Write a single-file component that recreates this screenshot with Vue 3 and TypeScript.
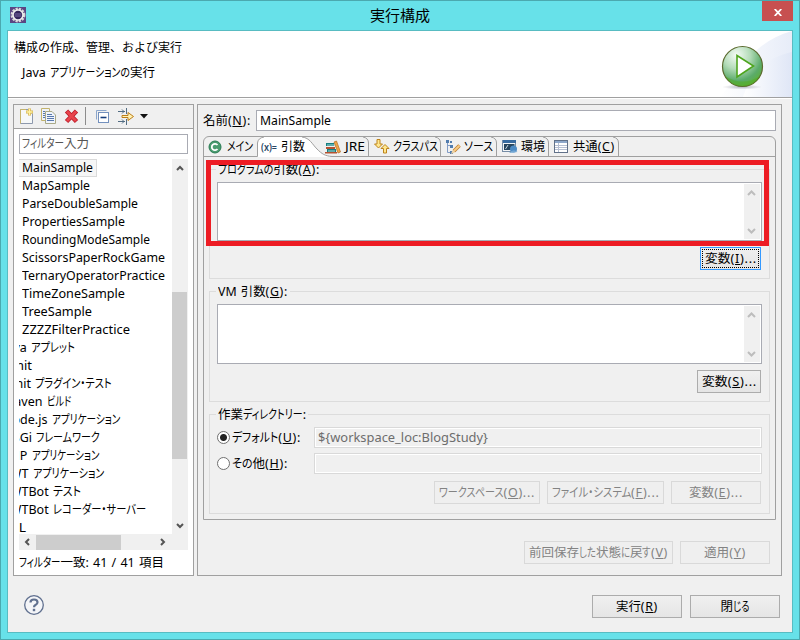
<script setup lang="ts">
import { defineComponent, h, onMounted, ref } from 'vue'

// Label fitted to a given width; "_X" marks an underlined mnemonic letter.
// Kana runs absorb the difference; labels without kana are scaled as a whole.
const Txt = defineComponent({
  props: {
    t: { type: String, required: true },
    w: { type: Number, required: true },
    full: { type: Boolean, default: false },
  },
  setup(props) {
    const root = ref<HTMLElement | null>(null)
    onMounted(() => {
      const inner = root.value?.firstElementChild as HTMLElement | null
      if (!inner) return
      const total = inner.getBoundingClientRect().width
      const kana = Array.from(inner.querySelectorAll<HTMLElement>('.kana'))
      const widths = kana.map((k) => k.getBoundingClientRect().width)
      const kanaTotal = widths.reduce((a, b) => a + b, 0)
      if (kanaTotal > 0) {
        const s = (props.w - (total - kanaTotal)) / kanaTotal
        kana.forEach((k, i) => {
          k.style.transform = `scaleX(${s})`
          k.style.marginRight = `${widths[i] * (s - 1)}px`
        })
      } else if (total > 0) {
        inner.style.transform = `scaleX(${props.w / total})`
      }
    })
    return () => {
      const parts = props.t.split(/([ぁ-んァ-ヶー・、]+|\(_[A-Z]\)[:.]*)/).filter(Boolean)
      return h('span', { class: ['txt', { full: props.full }], style: { width: props.w + 'px' }, ref: root }, [
        h(
          'span',
          { class: 'txt-in' },
          parts.map((p) => {
            if (/^\(_/.test(p)) return h('span', { class: 'key' }, ['(', h('u', p[2]), p.slice(3)])
            return /^[ぁ-んァ-ヶー・、]/.test(p) ? h('span', { class: 'kana' }, p) : p
          }),
        ),
      ])
    }
  },
})

interface Row { t: string; w: number; cat?: boolean; sel?: boolean }
const rows: Row[] = [
  { t: 'MainSample', w: 71, sel: true },
  { t: 'MapSample', w: 68 },
  { t: 'ParseDoubleSample', w: 116 },
  { t: 'PropertiesSample', w: 103 },
  { t: 'RoundingModeSample', w: 128 },
  { t: 'ScissorsPaperRockGame', w: 143 },
  { t: 'TernaryOperatorPractice', w: 143 },
  { t: 'TimeZoneSample', w: 103 },
  { t: 'TreeSample', w: 70 },
  { t: 'ZZZZFilterPractice', w: 108 },
  { t: 'Java アプレット', w: 72, cat: true },
  { t: 'JUnit', w: 29, cat: true },
  { t: 'JUnit プラグイン・テスト', w: 109, cat: true },
  { t: 'Maven ビルド', w: 68, cat: true },
  { t: 'Node.js アプリケーション', w: 117, cat: true },
  { t: 'OSGi フレームワーク', w: 97, cat: true },
  { t: 'PHP アプリケーション', w: 96, cat: true },
  { t: 'SWT アプリケーション', w: 101, cat: true },
  { t: 'SWTBot テスト', w: 78, cat: true },
  { t: 'SWTBot レコーダー・サーバー', w: 143, cat: true },
  { t: 'XSL', w: 23, cat: true },
]
</script>

<template>
  <div class="window">
    <header class="titlebar">
      <svg class="app-icon" width="16" height="16" viewBox="0 0 16 16">
        <rect width="16" height="16" fill="#5a4683" />
        <circle cx="8" cy="8" r="6.1" fill="none" stroke="#d8d8d8" stroke-width="2.6" stroke-dasharray="2.2 1" />
        <circle cx="8" cy="8" r="5" fill="#33265a" stroke="#eee" stroke-width="1.6" />
        <path d="M4.5 7h7M4.5 9h7" stroke="#7b6aa4" stroke-width="1" />
      </svg>
      <h1><Txt t="実行構成" :w="60" /></h1>
      <button class="close">
        <svg width="8" height="7" viewBox="0 0 8 7"><path d="M.7 0L7.3 7M7.3 0L.7 7" stroke="#fff" stroke-width="1.8" /></svg>
      </button>
    </header>

    <main class="client">
      <section class="banner">
        <div class="banner-text">
          <Txt t="構成の作成、管理、および実行" :w="168" full />
          <Txt class="sub" t="Java アプリケーションの実行" :w="133" />
        </div>
        <svg class="art" width="92" height="66" viewBox="0 0 92 66">
          <defs>
            <linearGradient id="sweep" x1="0" x2="1"><stop offset="0" stop-color="#fff" /><stop offset="1" stop-color="#dfe6f6" /></linearGradient>
            <radialGradient id="ball" cx=".35" cy=".22" r=".85">
              <stop offset="0" stop-color="#f5fbf5" /><stop offset=".4" stop-color="#b4dcb9" /><stop offset=".75" stop-color="#5bab6a" /><stop offset="1" stop-color="#5cb035" />
            </radialGradient>
            <radialGradient id="shade"><stop offset="0" stop-color="#778" stop-opacity=".5" /><stop offset="1" stop-color="#778" stop-opacity="0" /></radialGradient>
          </defs>
          <path d="M92 0C68 7 52 20 42 38L20 66H92Z" fill="url(#sweep)" opacity=".75" />
          <path d="M92 21C70 26 52 38 43 66H92Z" fill="url(#sweep)" />
          <ellipse cx="42" cy="56" rx="20" ry="2.5" fill="url(#shade)" />
          <circle cx="42.5" cy="35.5" r="20" fill="url(#ball)" stroke="#5c6b30" stroke-width="1.2" />
          <path d="M25 45A20 20 0 0 0 60 45Q43 56 25 45" fill="#4fad12" opacity=".4" />
          <path d="M37 24.500V46L53.500 35Z" fill="#fff" stroke="#4ea51d" stroke-width="1.600" />
        </svg>
      </section>

      <section class="work">
        <aside class="side">
          <div class="toolbar">
            <svg width="132" height="18" viewBox="0 0 132 18" fill="none">
              <path d="M1.500 2.500H9.500L13.500 7V16.500H1.500Z" fill="#f6f8f8" stroke="#8e99ad" />
              <path d="M1.500 16.500V2.500H7" stroke="#c6b46b" />
              <path d="M10.500 1.500V8.500M7 5H14" stroke="#d3b04e" stroke-width="3" />
              <path d="M10.500 2V8M7.500 5H13.500" stroke="#fff2a0" stroke-width="1.500" />
              <path d="M22.500 1.500H30.500V13.500H22.500Z" fill="#eff3f9" stroke="#c3b36d" />
              <path d="M26.500 4.500H33L36.500 8V16.500H26.500Z" fill="#eff4fc" stroke="#a9a987" />
              <path d="M24 4.500H26M24 6.500H26M24 8.500H26M24 10.500H26M28 7.500H33M28 9.500H35M28 11.500H35M28 13.500H35" stroke="#5878ad" />
              <path d="M47.500 4L57.500 14.500M57.500 4L47.500 14.500" stroke="#bd1e2c" stroke-width="4.600" />
              <path d="M48 4.500L57 14M57 4.500L48 14" stroke="#e8444c" stroke-width="2.800" />
              <path d="M66.500 0V18" stroke="#8c8c8c" />
              <path d="M77.500 12.500V3.500H87.500" stroke="#8ba6cc" /><rect x="79.500" y="5.500" width="10" height="10" fill="#fff" stroke="#7390bd" />
              <path d="M81.500 10.500H87.500" stroke="#153c7c" stroke-width="1.600" />
              <path d="M99 4.500H106M99 14.500H106M103 2.500L105 4.500L103 6.500M103 12.500L105 14.500L103 16.500M107.500 1V7M107.500 12V18" stroke="#536d83" />
              <path d="M103 8.500H109V5.500L114.500 9.500L109 13.500V10.500H103Z" fill="#fff3b4" stroke="#bd7e19" />
              <path d="M121 7H129L125 11.500Z" fill="#111" />
            </svg>
          </div>
          <div class="filter"><Txt t="フィルター入力" :w="67" /></div>
          <div class="tree">
            <ul class="rows">
              <li v-for="r in rows" :key="r.t" :class="{ cat: r.cat, sel: r.sel }"><Txt :t="r.t" :w="r.w" /></li>
            </ul>
            <div class="vbar">
              <svg width="8" height="6" viewBox="0 0 8 6"><path d="M1 5L4 2L7 5" fill="none" stroke="#555" stroke-width="2" /></svg>
              <i class="vthumb"></i>
              <svg width="8" height="6" viewBox="0 0 8 6"><path d="M1 1L4 4L7 1" fill="none" stroke="#555" stroke-width="2" /></svg>
            </div>
          </div>
          <div class="hbar">
            <svg width="6" height="8" viewBox="0 0 6 8"><path d="M5 1L2 4L5 7" fill="none" stroke="#555" stroke-width="2" /></svg>
            <i class="hthumb"></i>
            <svg width="6" height="8" viewBox="0 0 6 8"><path d="M1 1L4 4L1 7" fill="none" stroke="#555" stroke-width="2" /></svg>
          </div>
          <div class="status"><Txt t="フィルター一致: 41 / 41 項目" :w="145" /></div>
        </aside>

        <section class="panel">
          <div class="name-row">
            <Txt t="名前(_N):" :w="48" />
            <div class="input"><Txt t="MainSample" :w="71" /></div>
          </div>

          <div class="folder">
            <nav class="tabs">
              <svg class="tab-lines" width="571" height="20" viewBox="0 0 571 20" fill="none" stroke="#a0a0a0">
                <path d="M53.500 20V6Q54 1 60 0H98C106 1 108 7 113 12C118 17 121 19 128 20Z" fill="#fff" stroke="none" />
                <path d="M0 19.500H53.500V6Q54 1 60 0M98 0C106 1 108 7 113 12C118 17 121 19 128 19.500H571" />
                <path d="M159 0Q164.500 1 164.500 6V19M231 0Q236.500 1 236.500 6V19M287 0Q292.500 1 292.500 6V19M339 0Q344.500 1 344.500 6V19M409 0Q414.500 1 414.500 6V19" />
              </svg>
              <div class="tab t1">
                <svg width="14" height="14" viewBox="0 0 14 14"><circle cx="7" cy="7" r="6" fill="#4a9c70" stroke="#287b52" /><path d="M9.500 5A3.200 3.200 0 1 0 9.500 9" fill="none" stroke="#fff" stroke-width="1.800" /></svg>
                <Txt t="メイン" :w="26" />
              </div>
              <div class="tab t2">
                <span class="var"><Txt t="(x)=" :w="16" /></span>
                <Txt t="引数" :w="24" />
              </div>
              <div class="tab t3">
                <svg width="16" height="14" viewBox="0 0 16 14">
                  <path d="M1 3H9V6H1ZM2 9H11V12H2Z" fill="#167f81" /><path d="M2 5H10M3 11H10" stroke="#a8d8d3" />
                  <path d="M1 7H10V9H1ZM0 12H12V13.500H0Z" fill="#b65231" /><path d="M9 2L11.500 1L15.500 12L13 13Z" fill="#eda447" stroke="#b66b1f" stroke-width=".7" />
                </svg>
                <Txt t="JRE" :w="20" />
              </div>
              <div class="tab t4">
                <svg width="16" height="15" viewBox="0 0 16 15" fill="#ffe78e" stroke="#be841b">
                  <path d="M3 .5H6V5H8.500L4.500 9L.5 5H3Z" /><path d="M11 5.500L15 9.500H12.500V14H9.500V9.500H7Z" />
                </svg>
                <Txt t="クラスパス" :w="45" />
              </div>
              <div class="tab t5">
                <svg width="16" height="16" viewBox="0 0 16 16" fill="none">
                  <path d="M2.500 3V13.500H6M2.500 6.500H6" stroke="#819bc5" /><path d="M1 1H4V4H1ZM5 2H7V4H5ZM5 6H8V9H5ZM5 12H8V15H5Z" fill="#527cae" />
                  <path d="M14.500 6.500L9 12" stroke="#bf7a28" stroke-width="3.600" /><path d="M14.300 6.700L9 12" stroke="#f6cb86" stroke-width="2.100" /><path d="M6 15L7.500 11L10 13.500Z" fill="#ecd2a5" />
                </svg>
                <Txt t="ソース" :w="29" />
              </div>
              <div class="tab t6">
                <svg width="16" height="15" viewBox="0 0 16 15">
                  <rect x=".5" y="1.500" width="13" height="11" fill="#f2f4f5" stroke="#768ca5" /><rect x="1" y="1" width="13" height="3" fill="#376a9f" /><rect x="2" y="5" width="10.500" height="6" fill="#26445d" />
                  <path d="M3.500 10L6 6" stroke="#c7d5df" /><circle cx="11.500" cy="10" r="3.500" fill="#4b8ac4" /><path d="M7 14Q11.500 9 15.500 13Z" fill="#72a7d4" />
                </svg>
                <Txt t="環境" :w="24" />
              </div>
              <div class="tab t7">
                <svg width="14" height="13" viewBox="0 0 14 13">
                  <rect x=".5" y=".5" width="13" height="12" fill="#fff" stroke="#617189" /><path d="M1 1H13V3H1Z" fill="#8da7ca" />
                  <path d="M4.500 3V12M1 5.500H13M1 7.500H13M1 9.500H13" stroke="#b6bfd2" />
                </svg>
                <Txt t="共通(_C)" :w="42" />
              </div>
            </nav>

            <div class="group g1">
              <div class="legend"><Txt t="プログラムの引数(_A):" :w="102" /></div>
              <div class="area">
                <svg width="16" height="55" viewBox="0 0 16 55" fill="none" stroke="#bdbdbd" stroke-width="2"><path d="M4 11L7.500 7.500L11 11M4 45L7.500 48.500L11 45" /></svg>
              </div>
              <div class="actions"><button class="btn focus"><Txt t="変数(_I)..." :w="52" /></button></div>
            </div>

            <div class="group g2">
              <div class="legend"><Txt t="VM 引数(_G):" :w="70" /></div>
              <div class="area">
                <svg width="16" height="56" viewBox="0 0 16 56" fill="none" stroke="#bdbdbd" stroke-width="2"><path d="M4 11L7.500 7.500L11 11M4 46L7.500 49.500L11 46" /></svg>
              </div>
              <div class="actions"><button class="btn w64"><Txt t="変数(_S)..." :w="55" /></button></div>
            </div>

            <div class="group g3">
              <div class="legend"><Txt t="作業ディレクトリー:" :w="88" /></div>
              <div class="radio-row">
                <i class="radio on"></i><span class="radio-label"><Txt t="デフォルト(_U):" :w="69" /></span>
                <div class="field"><Txt t="${workspace_loc:BlogStudy}" :w="170" /></div>
              </div>
              <div class="radio-row second">
                <i class="radio"></i><span class="radio-label"><Txt t="その他(_H):" :w="56" /></span>
                <div class="field"></div>
              </div>
              <div class="actions">
                <button class="btn off w106"><Txt t="ワークスペース(_O)..." :w="96" /></button>
                <button class="btn off w117"><Txt t="ファイル・システム(_F)..." :w="108" /></button>
                <button class="btn off w90"><Txt t="変数(_E)..." :w="54" /></button>
              </div>
            </div>
          </div>

          <div class="panel-actions">
            <button class="btn off w149"><Txt t="前回保存した状態に戻す(_V)" :w="139" /></button>
            <button class="btn off w90"><Txt t="適用(_Y)" :w="42" /></button>
          </div>
        </section>
      </section>

      <footer class="footer">
        <svg width="22" height="22" viewBox="0 0 22 22" fill="none">
          <circle cx="11" cy="11" r="9.300" fill="#f4f5f8" stroke="#60708f" stroke-width="1.300" />
          <path d="M7.500 8.500Q7.500 5.500 11 5.500T14.500 8.300Q14.500 10 12.500 11Q11 11.800 11 13.300" stroke="#60708f" stroke-width="2.200" />
          <rect x="9.800" y="14.800" width="2.400" height="2.400" fill="#60708f" />
        </svg>
        <div class="footer-buttons">
          <button class="btn w90"><Txt t="実行(_R)" :w="42" /></button>
          <button class="btn w90"><Txt t="閉じる" :w="29" /></button>
        </div>
      </footer>
      <div class="highlight"></div>
    </main>
  </div>
</template>

<style>
body { margin: 0; overflow: hidden; }
.txt { display: inline-block; flex: none; white-space: pre; text-align: left; word-spacing: 1px; }
.txt-in { display: inline-block; transform-origin: 0 50%; font-feature-settings: "palt"; }
.txt.full .txt-in { font-feature-settings: normal; font-size: 12px; }
.txt .kana { display: inline-block; transform-origin: 0 50%; }
.txt .key { letter-spacing: 0.7px; }
.txt u { text-decoration-thickness: 1px; text-underline-offset: 1px; }
</style>

<style scoped>
* { box-sizing: border-box; }
.window { width: 800px; height: 640px; padding: 0 6px 6px; background: #67e1e9; border: 1px solid #4ba9af; font: 12.500px/18px "Noto Sans", "Noto Sans CJK JP", sans-serif; color: #000; position: relative; }
svg { display: block; flex: none; }
button { font: inherit; color: inherit; padding: 0; margin: 0; }
.titlebar { height: 29px; display: flex; align-items: flex-start; justify-content: space-between; }
.app-icon { margin: 6px 0 0 3px; }
.titlebar h1 { margin: 4px 0 0 12px; font-size: 15px; line-height: 20px; font-weight: 400; }
.close { width: 31px; height: 20px; border: 0; background: #c75050; display: flex; align-items: center; justify-content: center; padding-top: 2px; }
.client { height: 603px; background: #f0f0f0; border: 1px solid #58bcc2; }
.banner { height: 67px; background: #fff; border-bottom: 1px solid #a0a0a0; display: flex; justify-content: space-between; }
.banner-text { display: flex; flex-direction: column; align-items: flex-start; gap: 7px; padding: 8px 0 0 6px; }
.sub { margin-left: 8px; }
.work { display: flex; gap: 3px; padding: 5px 10px 0 5px; border-top: 1px solid #fff; }
.side { width: 181px; height: 472px; border: 1px solid #a0a0a0; background: #fff; }
.toolbar { height: 24px; background: #f0f0f0; border-bottom: 1px solid #a0a0a0; padding: 2px 0 0 5px; }
.filter { width: 169px; height: 20px; margin: 5px 0 5px 5px; border: 1px solid #a9abb3; padding-left: 2px; color: #555; display: flex; align-items: center; }
.tree { display: flex; margin-left: 5px; width: 169px; height: 375px; }
.rows { list-style: none; margin: 0; padding: 0; width: 153px; overflow: hidden; height: 375px; }
.rows li { height: 18px; padding-left: 3px; line-height: 18px; display: flex; }
.rows li.cat { padding: 0; margin-left: -16px; }
.rows li.sel { width: 78px; background: #f6f6f6; border: 1px solid #dadada; border-left: 0; line-height: 16px; }
.vbar { width: 16px; background: #f0f0f0; display: flex; flex-direction: column; align-items: center; padding: 6px 0 5px; }
.vthumb { width: 15px; height: 167px; background: #cdcdcd; margin: 121px 1px 64px 0; }
.hbar { margin-left: 5px; width: 169px; height: 16px; background: #f0f0f0; display: flex; align-items: center; padding-left: 5px; }
.hthumb { width: 85px; height: 15px; background: #cdcdcd; margin: 0 39px 0 6px; }
.status { padding-left: 5px; margin-top: 4px; }
.panel { width: 585px; height: 472px; border: 1px solid #a0a0a0; padding: 5px; }
.name-row { display: flex; justify-content: space-between; align-items: center; height: 21px; }
.input { width: 520px; height: 21px; border: 1px solid #a9abb3; background: #fff; padding: 0 0 0 3px; display: flex; align-items: center; }
.folder { margin-top: 5px; height: 384px; border: 1px solid #a0a0a0; border-radius: 6px 6px 0 0; }
.tabs { height: 20px; display: flex; position: relative; }
.tab-lines { position: absolute; left: 0; top: 0; }
.tab { display: flex; align-items: center; position: relative; height: 19px; }
.t1 { width: 54px; gap: 5px; padding-left: 4px; }
.t2 { width: 67px; gap: 4px; padding-left: 3px; }
.t3 { width: 49px; gap: 4px; }
.t4 { width: 71px; gap: 3px; }
.t5 { width: 57px; gap: 3px; }
.t6 { width: 52px; gap: 3px; }
.t7 { gap: 5px; }
.var { font-size: 10px; color: #294766; font-weight: 600; }
.group { margin: 12px 5px 0; border: 1px solid #dcdcdc; padding: 0 7px; }
.g1 { height: 110px; }
.g2 { height: 111px; }
.g3 { height: 100px; }
.legend { display: flex; width: fit-content; height: 16px; line-height: 18px; margin: -9px 0 5px -1px; padding: 0 2px; background: #f0f0f0; }
.area { height: 59px; border: 1px solid #a9abb3; background: #fff; padding: 1px; display: flex; justify-content: flex-end; }
.area svg { background: #f0f0f0; }
.g2 .area { height: 60px; }
.actions { display: flex; justify-content: flex-end; gap: 7px; margin: 6px 1px 0 0; }
.btn { height: 23px; border: 1px solid #acacac; background: linear-gradient(#f0f0f0, #e5e5e5); display: flex; align-items: center; justify-content: center; }
.btn.off { color: #838383; background: #efefef; border-color: #d9d9d9; }
.focus { width: 61px; border-color: #3399ff; outline: 1px dotted #000; outline-offset: -3px; }
.w64 { width: 64px; }
.w90 { width: 90px; }
.w106 { width: 106px; }
.w117 { width: 117px; }
.w149 { width: 149px; }
.radio-row { display: flex; align-items: center; height: 21px; }
.radio-row.second { margin: 5px 0 7px; }
.radio { width: 13px; height: 13px; border: 1px solid #707070; border-radius: 50%; background: #fff; flex: none; }
.radio.on { background: radial-gradient(circle, #222 3px, #fff 4px); }
.radio-label { width: 82px; margin-left: 2px; display: flex; }
.field { width: 448px; height: 21px; border: 1px solid #d9d9d9; box-shadow: inset 0 0 0 1px #fff; padding-left: 3px; color: #6d6d6d; display: flex; align-items: center; }
.g3 .actions { margin-top: 0; }
.panel-actions { display: flex; justify-content: flex-end; gap: 7px; margin: 21px 6px 0 0; }
.footer { display: flex; justify-content: space-between; padding: 19px 12px 0 15px; }
.footer > svg { margin-top: -1px; }
.footer-buttons { display: flex; gap: 8px; }
.highlight { position: absolute; left: 205px; top: 159px; width: 563px; height: 86px; border: 5px solid #ed1c24; }
</style>
